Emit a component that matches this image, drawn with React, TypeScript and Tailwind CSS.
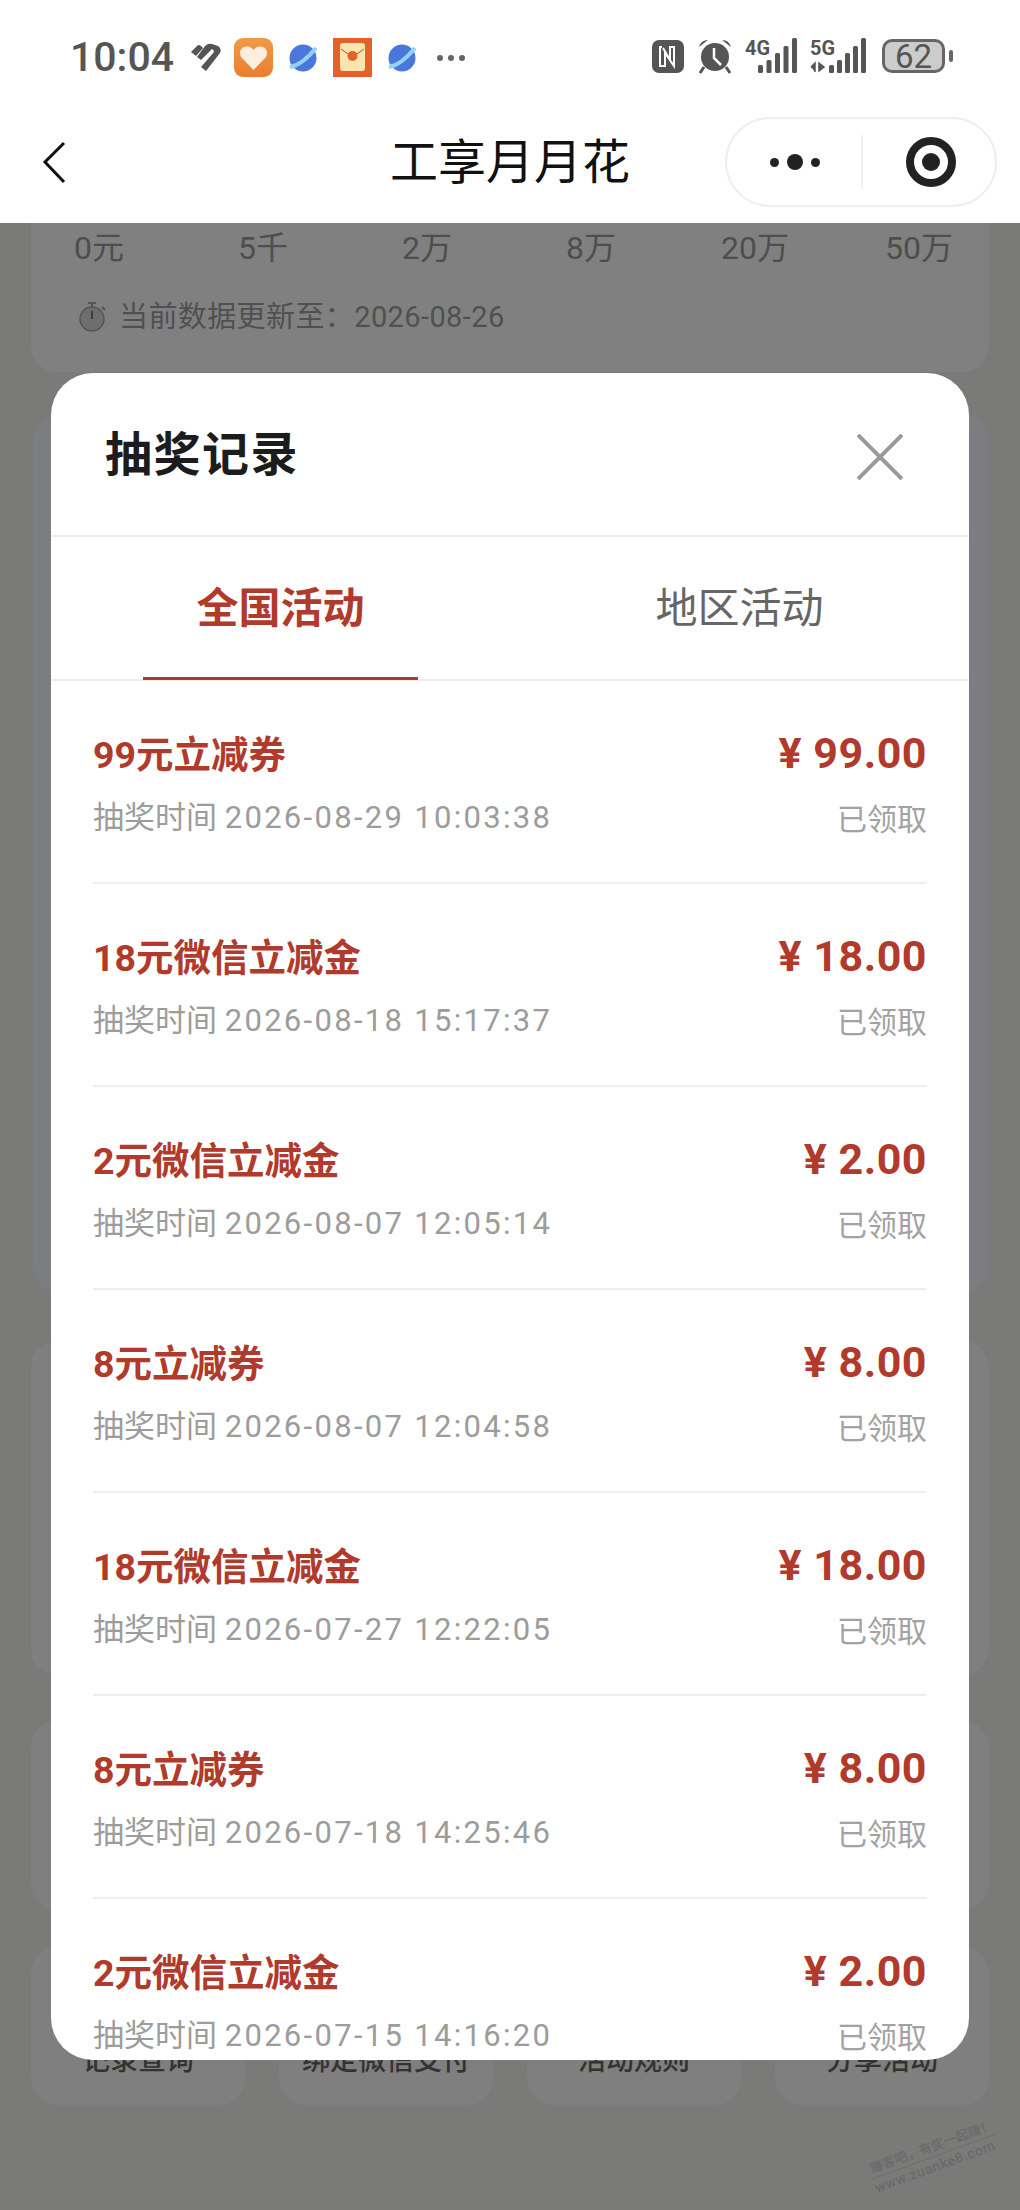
// 工享月月花 — lottery record sheet over the dimmed activity page.

const records = [
  { title: "99元立减券", time: "2026-08-29 10:03:38", amount: "99.00" },
  { title: "18元微信立减金", time: "2026-08-18 15:17:37", amount: "18.00" },
  { title: "2元微信立减金", time: "2026-08-07 12:05:14", amount: "2.00" },
  { title: "8元立减券", time: "2026-08-07 12:04:58", amount: "8.00" },
  { title: "18元微信立减金", time: "2026-07-27 12:22:05", amount: "18.00" },
  { title: "8元立减券", time: "2026-07-18 14:25:46", amount: "8.00" },
  { title: "2元微信立减金", time: "2026-07-15 14:16:20", amount: "2.00" },
];

const scale = ["0元", "5千", "2万", "8万", "20万", "50万"];
const shortcuts = ["记录查询", "绑定微信支付", "活动规则", "分享活动"];

function Squiggle() {
  return (
    <svg width="34" height="30" viewBox="0 0 34 30" className="shrink-0">
      <path d="M2 9 L8 3 Q10 1 12 3 L14 5 L7 13 Z" fill="#555" />
      <path d="M16 3 Q19 0 23 1 L29 3 Q33 6 31 10 L17 28 L12 24 L25 9 Q25 7 23 6 L12 17 L8 14 Z" fill="#555" />
    </svg>
  );
}

function HeartApp() {
  return (
    <svg width="39" height="39" viewBox="0 0 39 39" className="shrink-0">
      <defs>
        <linearGradient id="heartBg" x1="0" y1="0" x2="0" y2="1">
          <stop offset="0" stopColor="#f19a45" />
          <stop offset="1" stopColor="#e97f2e" />
        </linearGradient>
      </defs>
      <rect width="39" height="39" rx="9" fill="url(#heartBg)" />
      <path d="M19.5 32 L7 19 Q4 12 10 9 Q16 7 19.5 12 Q23 7 29 9 Q35 12 32 19 Z" fill="#fdeee0" />
    </svg>
  );
}

function Planet() {
  return (
    <svg width="30" height="30" viewBox="0 0 30 30" className="shrink-0">
      <circle cx="15" cy="15" r="13.5" fill="#4a76de" />
      <path d="M2 24 Q14 22 28 5" stroke="#93d2f6" strokeWidth="4" fill="none" />
    </svg>
  );
}

function RedPacket() {
  return (
    <svg width="39" height="39" viewBox="0 0 39 39" className="shrink-0">
      <rect width="39" height="39" fill="#e6602b" />
      <rect x="7" y="5" width="25" height="28" rx="3" fill="#fbe5ae" />
      <path d="M8 11 L19.5 19 L31 11" stroke="#b5562c" strokeWidth="1" fill="none" />
      <circle cx="19.5" cy="18" r="5" fill="#e2622c" />
    </svg>
  );
}

function NfcIcon() {
  return (
    <svg width="32" height="33" viewBox="0 0 32 33" className="shrink-0">
      <rect width="32" height="33" rx="7" fill="#555" />
      <path d="M10 7 H8 V26 H13 V13 L22 26 V7 H18 V20 L11 8" stroke="#fff" strokeWidth="2" fill="none" />
    </svg>
  );
}

function AlarmIcon() {
  return (
    <svg width="36" height="36" viewBox="0 0 36 36" className="shrink-0">
      <circle cx="18" cy="19" r="14" fill="#555" />
      <path d="M2 9 Q4 2 11 2 Z M34 9 Q32 2 25 2 Z" fill="#555" />
      <path d="M7 29 L3 35 M29 29 L33 35" stroke="#555" strokeWidth="3" />
      <path d="M17 10 V20 L24 27" stroke="#fff" strokeWidth="2.5" fill="none" />
    </svg>
  );
}

function SignalIcon({ label, arrows, offset, pitch }: { label: string; arrows?: boolean; offset: number; pitch: number }) {
  const heights = [8, 13, 20, 27, 35];
  return (
    <svg width="58" height="36" viewBox="0 0 58 36" className="shrink-0 overflow-visible">
      <text x="0" y="17" fontSize="20" fontWeight="700" fill="#555" fontFamily="Roboto" textLength="25" lengthAdjust="spacingAndGlyphs">
        {label}
      </text>
      {arrows && <path d="M1 29 L5 25 V34 M5 29 H1 M9 25 L14 29 L9 33 Z M8 29 H14" stroke="#555" strokeWidth="1.5" fill="#555" />}
      {heights.map((h, i) => (
        <rect key={h} x={offset + i * pitch} y={35 - h} width="5" height={h} rx="1.5" fill="#555" />
      ))}
    </svg>
  );
}

function Stopwatch() {
  return (
    <svg width="30" height="32" viewBox="0 0 30 32" className="shrink-0">
      <circle cx="14" cy="18" r="12" fill="#6e6e6e" stroke="#555" strokeWidth="1.5" />
      <path d="M14 2 V7 M10 2 H18 M24 6 L27 9" stroke="#555" strokeWidth="2" />
      <path d="M14 10 V18" stroke="#3c3c3c" strokeWidth="2" />
    </svg>
  );
}

function StatusBar() {
  return (
    <div className="flex h-[112px] items-start justify-between pl-[70px] pr-[67px] pt-[38px]">
      <div className="flex h-[39px] items-center">
        <span className="w-[119px] text-[41px] leading-[39px] font-medium text-[#555]">10:04</span>
        <Squiggle />
        <div className="ml-[11px] flex items-center gap-[15px]">
          <HeartApp />
          <Planet />
          <RedPacket />
          <Planet />
        </div>
        <span className="ml-[20px] flex gap-[5px]">
          <i className="h-[6px] w-[6px] rounded-full bg-[#666]" />
          <i className="h-[6px] w-[6px] rounded-full bg-[#666]" />
          <i className="h-[6px] w-[6px] rounded-full bg-[#666]" />
        </span>
      </div>
      <div className="flex items-center">
        <NfcIcon />
        <div className="ml-[13px]"><AlarmIcon /></div>
        <div className="ml-[12px]"><SignalIcon label="4G" offset={13} pitch={8.5} /></div>
        <div className="ml-[7px]"><SignalIcon label="5G" arrows offset={19} pitch={8} /></div>
        <div className="ml-[14px] flex h-[34px] w-[63px] items-center justify-center rounded-[10px] border-[3px] border-[#666] bg-[#ccc] text-[33px] leading-none text-[#555]">
          62
        </div>
        <i className="ml-[4px] h-[12px] w-[4px] rounded-sm bg-[#666]" />
      </div>
    </div>
  );
}

function NavBar() {
  return (
    <div className="relative flex h-[111px] items-start">
      <svg width="24" height="44" viewBox="0 0 24 44" className="ml-[42px] mt-[29px]">
        <path d="M22 2 L3 21 L22 41" stroke="#111" strokeWidth="3" fill="none" />
      </svg>
      <span className="absolute inset-x-0 top-[21px] text-center text-[48px] leading-[60px] text-[#111]">工享月月花</span>
      <div className="relative ml-auto mr-[23px] mt-[5px] flex h-[90px] w-[272px] items-center rounded-full border-2 border-[#eee]">
        <div className="flex w-[134px] items-center justify-center gap-[8px] pl-[2px]">
          <i className="h-[9px] w-[9px] rounded-full bg-[#222]" />
          <i className="h-[16px] w-[16px] rounded-full bg-[#222]" />
          <i className="h-[9px] w-[9px] rounded-full bg-[#222]" />
        </div>
        <div className="h-[54px] w-[2px] bg-[#f0f0f0]" />
        <div className="flex flex-1 justify-center pl-[4px]">
          <div className="flex h-[50px] w-[50px] items-center justify-center rounded-full border-[8px] border-[#222]">
            <i className="h-[18px] w-[18px] rounded-full bg-[#222]" />
          </div>
        </div>
      </div>
    </div>
  );
}

function DimmedPage() {
  return (
    <div className="flex h-[1987px] flex-col bg-[#7a7a78] px-[31px]">
      <div className="h-[149px] rounded-b-[26px] bg-[#808080] pt-[6px]">
        <div className="-ml-[14px] grid w-[984px] grid-cols-6 text-center text-[32px] leading-[38px] text-[#4e4e4e]">
          {scale.map((label) => (
            <span key={label}>{label}</span>
          ))}
        </div>
        <div className="mt-[32px] flex items-center gap-[11px] pl-[47px] text-[29px] leading-[36px] tracking-[0.4px] text-[#505050]">
          <Stopwatch />
          <span>当前数据更新至：2026-08-26</span>
        </div>
      </div>
      <div className="mt-[42px] ml-[2px] h-[879px] rounded-[26px] bg-[#7c7d81]" />
      <div className="mt-[48px] h-[334px] rounded-[26px] bg-[#7f7f7f]" />
      <div className="mt-[46px] h-[189px] rounded-[26px] bg-[#7f7f7f]" />
      <div className="mt-[37px] grid h-[158px] grid-cols-4 gap-x-[34px]">
        {shortcuts.map((label) => (
          <div key={label} className="flex justify-center rounded-[26px] bg-[#7f7f7f] pt-[96px] text-[28px] leading-[36px] font-medium text-[#333]">
            {label}
          </div>
        ))}
      </div>
    </div>
  );
}

function RecordRow({ title, time, amount }: { title: string; time: string; amount: string }) {
  return (
    <div className="mx-[42px] flex h-[203px] shrink-0 justify-between border-b-2 border-[#eee]">
      <div className="pt-[50px]">
        <div className="text-[37.5px] leading-[48px] font-bold text-[#b03a2b]">{title}</div>
        <div className="mt-[17px] text-[31px] leading-[44px] text-[#9c9c9c]">
          抽奖时间 <span className="tracking-[2.3px]">{time}</span>
        </div>
      </div>
      <div className="flex flex-col items-end pt-[44px]">
        <div className="text-[43px] leading-[56px] font-bold tracking-[0.5px] text-[#b03a2b]">¥ {amount}</div>
        <div className="mt-[17px] text-[30px] leading-[44px] text-[#a2a2a2]">已领取</div>
      </div>
    </div>
  );
}

function RecordSheet() {
  return (
    <div className="absolute left-[51px] top-[373px] flex h-[1687px] w-[918px] flex-col overflow-hidden rounded-[42px] bg-white">
      <div className="flex h-[164px] shrink-0 items-center justify-between border-b-2 border-[#eee] pl-[54px] pr-[66px]">
        <span className="mt-[2px] text-[47px] leading-[60px] font-bold tracking-[1.5px] text-[#1c1c1c]">抽奖记录</span>
        <svg width="46" height="46" viewBox="0 0 46 46" className="mt-[5px]">
          <path d="M1 1 L45 45 M45 1 L1 45" stroke="#9a9a9a" strokeWidth="4" />
        </svg>
      </div>
      <div className="flex h-[144px] shrink-0 border-b-2 border-[#eee]">
        <div className="relative flex w-[459px] items-center justify-center text-[42px] font-bold text-[#b03a2b]">
          全国活动
          <i className="absolute bottom-[-1px] left-[92px] h-[3px] w-[275px] bg-[#b03a2b]" />
        </div>
        <div className="flex flex-1 items-center justify-center text-[42px] text-[#666]">地区活动</div>
      </div>
      {records.map((record) => (
        <RecordRow key={record.time} {...record} />
      ))}
    </div>
  );
}

export default function App() {
  return (
    <div className="relative h-[2210px] w-[1020px] overflow-hidden font-[Roboto,'Noto_Sans_CJK_SC',sans-serif]">
      <div className="bg-white">
        <StatusBar />
        <NavBar />
      </div>
      <DimmedPage />
      <RecordSheet />
      <div className="absolute left-[868px] top-[2138px] -rotate-[20deg] text-[14px] leading-[18px] font-medium text-[#6a6a6a]">
        <div className="border-b border-[#6f6f6f] pl-[2px] text-[13px]">赚客吧，有奖一起赚！</div>
        <div className="tracking-[0.6px]">www.zuanke8.com</div>
      </div>
    </div>
  );
}
